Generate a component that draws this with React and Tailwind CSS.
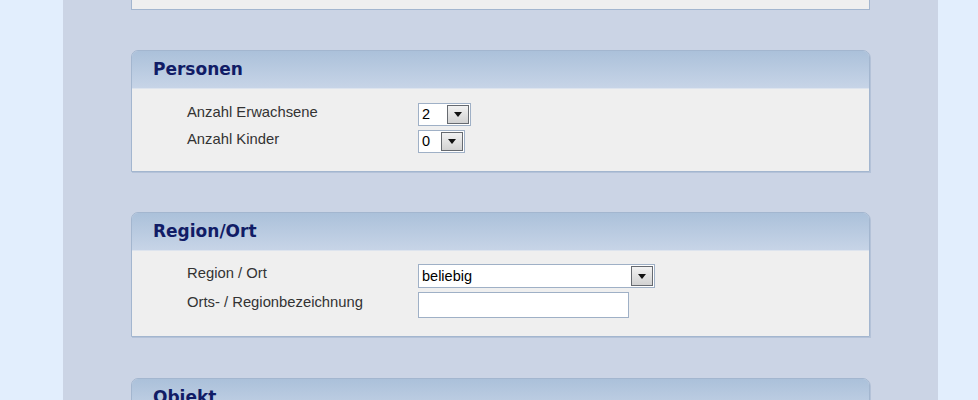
import React from "react";

function Arrow() {
  return (
    <div className="flex h-full w-[22px] items-center justify-center border border-[#666a70] bg-gradient-to-b from-[#f2f2f2] to-[#d2d2d2]">
      <svg width="8" height="5" viewBox="0 0 8 5">
        <path d="M0 0 L8 0 L4 5 Z" fill="#111" />
      </svg>
    </div>
  );
}

function Select({ value, width, height = 23 }) {
  return (
    <div
      className="flex items-stretch border border-[#9fb0c6] bg-white"
      style={{ width, height }}
    >
      <div className="flex flex-1 items-center pl-[3px] text-[14.5px] leading-none text-black">
        {value}
      </div>
      <div className="p-[1px]">
        <Arrow />
      </div>
    </div>
  );
}

function Panel({ title, children, bodyClass, className = "" }) {
  return (
    <div className={"shrink-0 rounded-t-[7px] border border-[#a3b6cf] shadow-[1px_1px_0_#b4c2d8] " + className}>
      <div className="flex h-[38px] items-center rounded-t-[6px] bg-gradient-to-b from-[#abc1da] to-[#c7d4e7] pl-[21px] border-b border-[#dde4ee]">
        <span className="text-[17px] font-bold text-[#111c66] [font-family:'DejaVu_Sans',sans-serif]">
          {title}
        </span>
      </div>
      <div className={"bg-[#efefef] pl-[55px] " + bodyClass}>{children}</div>
    </div>
  );
}

function Row({ label, children }) {
  return (
    <div className="flex items-center">
      <div className="w-[231px] text-[14.8px] text-[#333] -mt-[5px]">{label}</div>
      {children}
    </div>
  );
}

export default function App() {
  return (
    <div className="flex h-[400px] w-[978px] overflow-hidden bg-[#e2eefd] [font-family:'Liberation_Sans',Arial,sans-serif]">
      <div className="ml-[63px] flex w-[875px] flex-col bg-[#cbd4e5] px-[68px]">
        <div className="h-[10px] w-[739px] shrink-0 border-x border-b border-[#a3b6cf] bg-[#efefef]" />
        <Panel title="Personen" className="mt-[40px]" bodyClass="pt-[14px] pb-[18px] flex flex-col gap-[4px]">
          <Row label="Anzahl Erwachsene">
            <Select value="2" width={53} height={23} />
          </Row>
          <Row label="Anzahl Kinder">
            <Select value="0" width={47} height={23} />
          </Row>
        </Panel>
        <Panel title="Region/Ort" className="mt-[40px]" bodyClass="pt-[13px] pb-[18px] flex flex-col gap-[4px]">
          <Row label="Region / Ort">
            <Select value="beliebig" width={237} height={24} />
          </Row>
          <Row label="Orts- / Regionbezeichnung">
            <div className="h-[26px] w-[211px] border border-[#9fb0c6] bg-white" />
          </Row>
        </Panel>
        <Panel title="Objekt" className="mt-[41px]" bodyClass="h-[60px]" />
      </div>
    </div>
  );
}
